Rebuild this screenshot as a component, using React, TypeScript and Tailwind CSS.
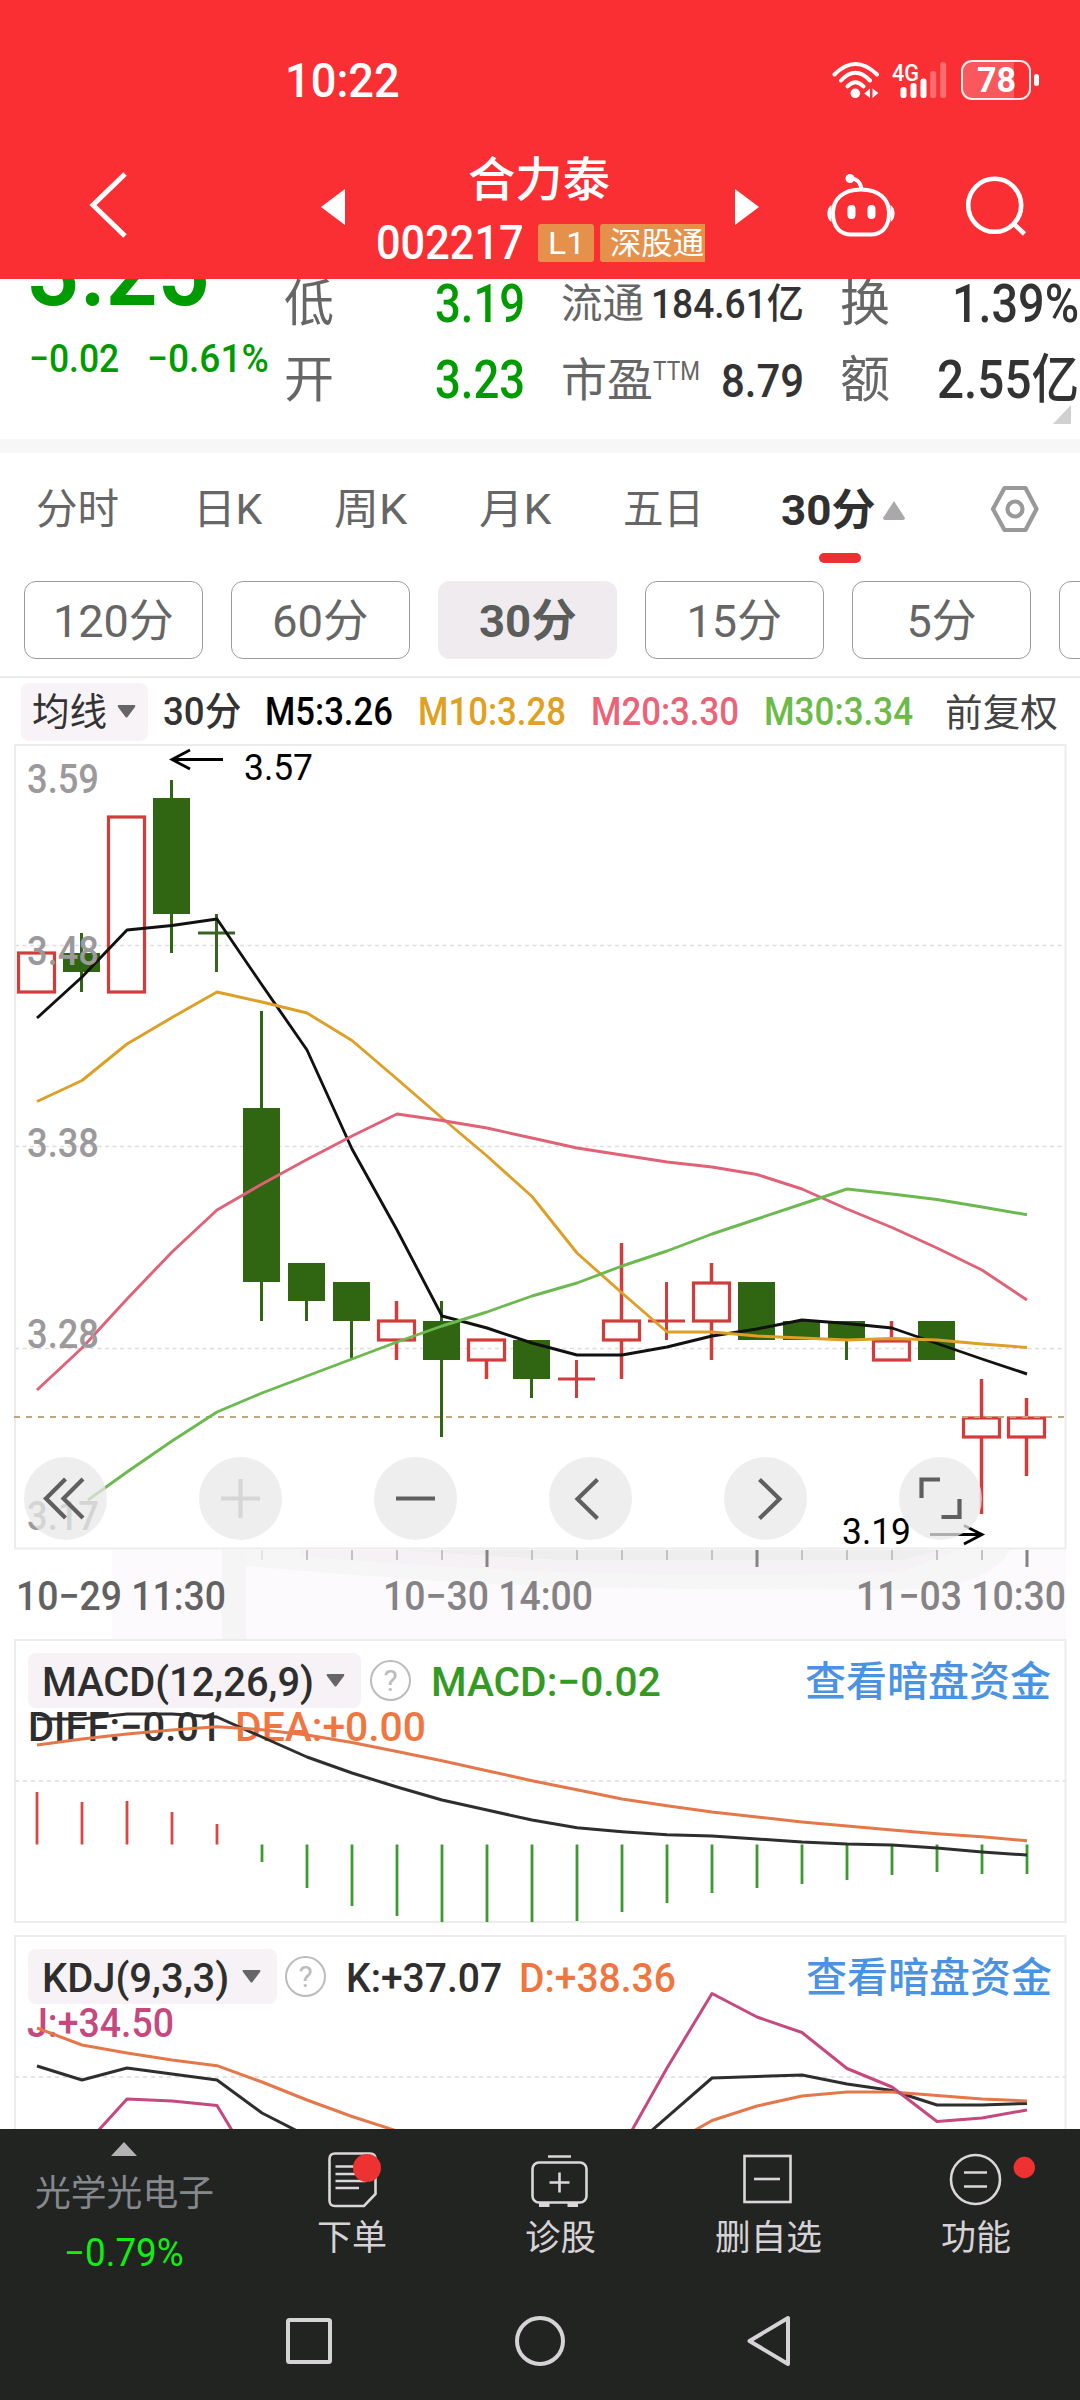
import { useLayoutEffect, useRef, useState } from 'react';
import type { ReactNode } from 'react';
import clsx from 'clsx';

const FONT = "font-[Roboto,'Noto_Sans_CJK_SC',sans-serif]";

// Condensed label: squeezes its text horizontally into the width given by className
const Fit = ({ className, children }: { className: string; children: ReactNode }) => {
  const inner = useRef<HTMLSpanElement>(null);
  const [scale, setScale] = useState(1);

  useLayoutEffect(() => {
    const el = inner.current;
    if (el && el.parentElement) {
      setScale(el.parentElement.clientWidth / el.offsetWidth);
    }
  }, [children]);

  return (
    <span className={clsx('block shrink-0 whitespace-nowrap leading-none', className)}>
      <span ref={inner} className="inline-block origin-left" style={{ transform: `scaleX(${scale})` }}>
        {children}
      </span>
    </span>
  );
};

const StatusBar = () => (
  <div className="flex h-[160px] items-center pl-[285px] text-white">
    <Fit className="w-[115px] pt-[2px] text-[48px]">10:22</Fit>
    <svg className="ml-[432px] h-[38px] w-[48px] shrink-0" viewBox="0 0 48 38" fill="none" stroke="#fff" strokeWidth="4" strokeLinecap="round">
      <path d="M2.5 13.5Q23.3 -7.5 45 13.5M9 19.5Q23.3 4 38 19.5M15.5 25.3Q23.3 17 31.5 25.3" />
      <circle cx="23.3" cy="32.3" r="4.8" fill="#fff" stroke="none" />
      <path d="M32.3 32.5L38 27.5V37zM40.5 27.5L46.3 32L40.5 37z" fill="#fff" stroke="none" />
    </svg>
    <div className="relative ml-[12px] h-[38px] w-[56px] shrink-0">
      <Fit className="w-[27px] text-[24px]">4G</Fit>
      <svg className="absolute left-0 top-0 h-[38px] w-[56px]" viewBox="0 0 56 38" fill="#fff">
        <rect x="8.5" y="26" width="6" height="11" rx="2.5" />
        <rect x="18.5" y="22" width="6" height="15" rx="2.5" />
        <rect x="28.5" y="17.5" width="6" height="19.5" rx="2.5" />
        <rect x="38.2" y="10" width="6" height="27" rx="2.5" opacity=".3" />
        <rect x="48.2" y="1" width="6" height="36" rx="2.5" opacity=".3" />
      </svg>
    </div>
    <div className="ml-[13px] flex h-[40px] w-[70px] shrink-0 items-center justify-center rounded-[11px] border-[2.5px] border-white/90 bg-linear-to-r from-white/20 from-78% to-transparent to-78%">
      <Fit className="w-[39px] text-[35px] font-bold">78</Fit>
    </div>
    <div className="ml-[3px] h-[12px] w-[4.5px] shrink-0 rounded-full bg-white" />
  </div>
);

const TitleBar = () => (
  <div className="flex h-[119px] pl-[88px] text-white">
    <svg className="mt-[10px] h-[70px] w-[42px] shrink-0" viewBox="0 0 42 70" fill="none" stroke="#fff" strokeWidth="5">
      <path d="M37 4L5 35L37 66" />
    </svg>
    <svg className="ml-[191px] mt-[29px] h-[36px] w-[24px] shrink-0" viewBox="0 0 24 36" fill="#fff">
      <path d="M0 18L24 0V36z" />
    </svg>
    <div className="ml-[29px] w-[333px] shrink-0">
      <div className="mt-[-6px] flex h-[50px] items-center justify-center pr-[4px]">
        <Fit className="w-[142px] text-[47px]">合力泰</Fit>
      </div>
      <div className="mt-[20px] flex h-[38px] items-center">
        <Fit className="ml-[2px] w-[148px] text-[48px]">002217</Fit>
        <span className="ml-[14px] flex h-[38px] w-[56px] items-center justify-center rounded-[3px] bg-[#e5914b] font-normal">
          <Fit className="w-[37px] text-[32px]">L1</Fit>
        </span>
        <span className="ml-[6px] flex h-[38px] w-[105px] items-center rounded-l-[3px] bg-[#e5914b] pl-[10px] font-normal">
          <Fit className="w-[94px] text-[31px]">深股通</Fit>
        </span>
      </div>
    </div>
    <svg className="ml-[28px] mt-[29px] h-[36px] w-[24px] shrink-0" viewBox="0 0 24 36" fill="#fff">
      <path d="M24 18L0 0V36z" />
    </svg>
    {/* assistant: wide rounded head with ears and a bent antenna */}
    <svg className="ml-[66px] mt-[12px] h-[68px] w-[72px] shrink-0" viewBox="0 0 72 68" fill="none" stroke="#fff" strokeWidth="4">
      <path d="M36 17.500C54 17.500 64 27 64 41C64 56 56 62.500 46 62.500H26C16 62.500 8 56 8 41C8 27 18 17.500 36 17.500z" />
      <circle cx="25" cy="6.500" r="4.500" fill="#fff" stroke="none" />
      <path d="M25 6C33 7 36 11 36.500 18" />
      <path d="M6.500 33C1 36 1 47 6.500 50zM65.500 33C71 36 71 47 65.500 50z" fill="#fff" stroke="none" />
      <rect x="22.500" y="33" width="8" height="14" rx="4" fill="#fff" stroke="none" />
      <rect x="42.500" y="33" width="8" height="14" rx="4" fill="#fff" stroke="none" />
    </svg>
    <svg className="ml-[68px] mt-[14px] h-[64px] w-[64px] shrink-0" viewBox="0 0 64 64" fill="none" stroke="#fff" strokeWidth="4.600">
      <circle cx="29.700" cy="31.300" r="26.500" />
      <path d="M48 49L59.500 60" />
    </svg>
  </div>
);

const QuoteStrip = () => (
  <div className="relative flex h-[160px] overflow-hidden">
    <div className="w-[284px] shrink-0 text-[#009b00]">
      <div className="flex h-[36px] items-end pl-[28px]">
        <Fit className="mb-[-6px] w-[182px] text-[98px] font-semibold">3.25</Fit>
      </div>
      <div className="mt-[24px] flex h-[40px] items-center pl-[29px]">
        <Fit className="w-[90px] text-[39px]">−0.02</Fit>
        <Fit className="ml-[28px] w-[122px] text-[39px]">−0.61%</Fit>
      </div>
    </div>
    <div className="text-[#666]">
      <div className="flex h-[50px] items-center">
        <Fit className="w-[50px] text-[50px] font-normal">低</Fit>
        <Fit className="ml-[101px] w-[90px] text-[53px]"><span className="text-[#009b00]">3.19</span></Fit>
        <Fit className="ml-[36px] w-[83px] text-[41px] font-normal">流通</Fit>
        <Fit className="ml-[7px] w-[153px] text-[41px] text-[#333]">184.61亿</Fit>
        <Fit className="ml-[36px] w-[50px] text-[50px] font-normal">换</Fit>
        <Fit className="ml-[62px] w-[127px] text-[53px] text-[#333]">1.39%</Fit>
      </div>
      <div className="mt-[25px] flex h-[52px] items-center">
        <Fit className="w-[50px] text-[50px] font-normal">开</Fit>
        <Fit className="ml-[101px] w-[90px] text-[53px]"><span className="text-[#009b00]">3.23</span></Fit>
        <Fit className="ml-[36px] w-[92px] text-[46px] font-normal">市盈</Fit>
        <Fit className="mb-[18px] w-[47px] text-[25px] font-normal">TTM</Fit>
        <Fit className="ml-[21px] w-[83px] text-[47px] text-[#333]">8.79</Fit>
        <Fit className="ml-[36px] w-[50px] text-[50px] font-normal">额</Fit>
        <Fit className="ml-[47px] w-[142px] text-[53px] text-[#333]">2.55亿</Fit>
      </div>
    </div>
    <svg className="absolute bottom-[15px] right-[9px] h-[19px] w-[18px]" viewBox="0 0 18 19" fill="#d0d0d0">
      <path d="M18 0V19H0z" />
    </svg>
  </div>
);

const PeriodTabs = () => (
  <div className="flex h-[128px] items-start pl-[36px] pt-[31px] text-[#666]">
    <div className="flex h-[52px] items-center font-normal">
      <Fit className="w-[83px] text-[42px]">分时</Fit>
      <Fit className="ml-[74px] w-[69px] text-[42px]">日K</Fit>
      <Fit className="ml-[72px] w-[73px] text-[42px]">周K</Fit>
      <Fit className="ml-[72px] w-[72px] text-[42px]">月K</Fit>
      <Fit className="ml-[72px] w-[81px] text-[42px]">五日</Fit>
      <div className="relative ml-[77px] flex items-center">
        <Fit className="w-[94px] text-[43px] font-bold text-[#303030]">30分</Fit>
        <svg className="ml-[8px] h-[19px] w-[22px]" viewBox="0 0 22 19" fill="#aaa8aa">
          <path d="M11 0L22 17Q22 19 20 19H2Q0 19 0 17z" />
        </svg>
        <span className="absolute left-[38px] top-[64px] h-[10px] w-[42px] rounded-full bg-[#eb3132]" />
      </div>
      <svg className="mb-[2px] ml-[85px] h-[48px] w-[50px]" viewBox="0 0 50 48" fill="none" stroke="#999" strokeWidth="4.200" strokeLinejoin="round">
        <path d="M14.500 3H35.500L46.500 24L35.500 45H14.500L3 24z" />
        <circle cx="25" cy="24" r="7.500" />
      </svg>
    </div>
  </div>
);

const minutes = [
  { label: '120分', width: 'w-[121px]' },
  { label: '60分', width: 'w-[97px]' },
  { label: '30分', width: 'w-[98px]' },
  { label: '15分', width: 'w-[96px]' },
  { label: '5分', width: 'w-[70px]' },
];

const MinuteTabs = () => (
  <div className="flex h-[97px] items-start gap-[28px] overflow-hidden border-b-2 border-[#ececec] pl-[24px]">
    {minutes.map((item) => (
      <div
        key={item.label}
        className={clsx(
          'flex h-[78px] w-[179px] shrink-0 items-center justify-center rounded-[12px] pt-[3px]',
          item.label === '30分' ? 'bg-[#efebef] font-bold text-[#5a5d5a]' : 'border-[1.500px] border-[#9b9b9b] font-normal text-[#666]',
        )}
      >
        <Fit className={clsx('text-[45px]', item.width)}>{item.label}</Fit>
      </div>
    ))}
    <div className="h-[78px] w-[179px] shrink-0 rounded-[12px] border border-[#9b9b9b]" />
  </div>
);

const Caret = ({ className }: { className?: string }) => (
  <svg className={clsx('h-[13px] w-[19px] shrink-0', className)} viewBox="0 0 19 13" fill="#666">
    <path d="M1.500 0H17.500Q19 0 18 2L10.500 12Q9.500 13 8.500 12L1 2Q0 0 1.500 0z" />
  </svg>
);

const AverageRow = () => (
  <div className="flex h-[66px] items-center pl-[21px] pt-[3px] text-[39px]">
    <div className="flex h-[58px] w-[127px] items-center rounded-[8px] bg-[#f7f3f7] pl-[11px] text-[#333]">
      <Fit className="w-[75px] pt-[1px] text-[38px] font-normal">均线</Fit>
      <Caret className="ml-[10px]" />
    </div>
    <Fit className="ml-[15px] w-[78px] pt-[2px] text-[#333]">30分</Fit>
    <Fit className="ml-[24px] w-[128px] pt-[2px] text-black">M5:3.26</Fit>
    <Fit className="ml-[25px] w-[148px] pt-[2px] text-[#e0a020]">M10:3.28</Fit>
    <Fit className="ml-[25px] w-[148px] pt-[2px] text-[#ea6478]">M20:3.30</Fit>
    <Fit className="ml-[25px] w-[149px] pt-[2px] text-[#6cba48]">M30:3.34</Fit>
    <Fit className="ml-[32px] w-[113px] pt-[2px] text-[38px] font-normal text-[#444]">前复权</Fit>
  </div>
);

// [top wick, body top, body bottom, bottom wick, rising]
const candles: [number, number, number, number, boolean][] = [
  [953, 953, 992, 992, true],
  [933, 953, 972, 992, false],
  [817, 817, 992, 992, true],
  [780, 798, 914, 953, false],
  [914, 933, 933, 972, false],
  [1011, 1108, 1282, 1321, false],
  [1263, 1263, 1301, 1321, false],
  [1282, 1282, 1321, 1358, false],
  [1301, 1321, 1340, 1360, true],
  [1301, 1321, 1360, 1437, false],
  [1340, 1340, 1360, 1379, true],
  [1340, 1340, 1379, 1398, false],
  [1360, 1379, 1379, 1398, true],
  [1243, 1321, 1340, 1379, true],
  [1282, 1321, 1321, 1340, true],
  [1263, 1283, 1321, 1360, true],
  [1282, 1282, 1340, 1340, false],
  [1321, 1321, 1340, 1340, false],
  [1321, 1321, 1340, 1360, false],
  [1321, 1341, 1360, 1360, true],
  [1321, 1321, 1360, 1360, false],
  [1379, 1418, 1437, 1514, true],
  [1398, 1418, 1437, 1476, true],
];

const ma5 = [1018, 977, 930, 925.5, 919, 985, 1050, 1149, 1230, 1316, 1328, 1343, 1355, 1355, 1347, 1336, 1329, 1320, 1323.5, 1328, 1343.5, 1359, 1374];
const ma10 = [1101.5, 1080.5, 1044, 1017.5, 992, 1002, 1013, 1040.5, 1079, 1118, 1156, 1196.5, 1253, 1293, 1332, 1332, 1336, 1338, 1340, 1338.5, 1340, 1344, 1347.5];
const ma20 = [1390, 1348, 1299, 1252, 1210, 1184, 1159.5, 1136, 1114, 1120.5, 1128, 1138, 1148, 1155, 1162, 1167, 1174.5, 1189, 1209, 1227.5, 1248, 1270, 1300];
const ma30 = [1526, 1503, 1472, 1441, 1412, 1393, 1376, 1359, 1342, 1326, 1312, 1296, 1283, 1266, 1251, 1234, 1219, 1204, 1189, 1194, 1199.5, 1207, 1214.7];

const cx = (i: number) => 36.5 + i * 45;
const line = (ys: number[], from = 0) => ys.map((y, i) => `${cx(i + from) + 0.5},${y}`).join(' ');

const Label = ({ x, y, w, size, fill, children }: { x: number; y: number; w: number; size: number; fill: string; children: string }) => (
  <text x={x} y={y} textLength={w} lengthAdjust="spacingAndGlyphs" fontSize={size} fill={fill}>
    {children}
  </text>
);

const chartButtons: { d: string; muted?: boolean }[] = [
  { d: 'M41.500 22L22 41.500L41.500 61M59 22L39.500 41.500L59 61' },
  { d: 'M22 41.500H61M41.500 22V61', muted: true },
  { d: 'M22 41.500H61' },
  { d: 'M48.500 22.500L28.500 42L48.500 61.500' },
  { d: 'M35.500 22.500L55.500 42L35.500 61.500' },
  { d: 'M22.500 41V22.500H41M60.500 42V60H42.500' },
];

const CandleChart = () => (
  <div className="relative h-[896px]">
    <svg className="block h-[896px] w-[1080px]" viewBox="0 743 1080 896">
      {/* time axis backdrop */}
      <rect x="112" y="1550" width="954" height="98" fill="#fdfafe" />
      <rect x="222" y="1550" width="24" height="89" fill="#f5f5f5" />
      <path d="M246 1550H1010Q990 1588 900 1590L580 1588Q420 1582 246 1566z" fill="#f6f6f6" />
      <path d="M300 1550H960L900 1572Q600 1582 300 1556z" fill="#f5f1f4" />
      <path d="M400 1550H940L900 1560H560z" fill="#eeeeee" />

      <g stroke="#dedede" strokeWidth="1.500" strokeDasharray="4 3.500">
        <path d="M15 945.500H1066M15 1146.500H1066M15 1348.500H1066" />
      </g>
      <rect x="15" y="745" width="1050.500" height="803.500" fill="none" stroke="#ececec" strokeWidth="2" />

      {candles.map(([high, top, bottom, low, rising], i) => {
        const x = cx(i);
        if (top === bottom) {
          return (
            <path key={i} d={`M${x} ${high}V${low}M${x - 18.5} ${top}H${x + 18.5}`} stroke={rising ? '#d23c3a' : '#386320'} strokeWidth="3" />
          );
        }
        return rising ? (
          <g key={i} fill="none" stroke="#d23c3a" strokeWidth="3.200">
            <path d={`M${x} ${high}V${top}M${x} ${bottom}V${low}`} strokeWidth="3.500" />
            <rect x={x - 18} y={top} width="36" height={bottom - top} />
          </g>
        ) : (
          <g key={i} fill="#306612">
            <rect x={x - 1.5} y={high} width="3" height={low - high} />
            <rect x={x - 18.5} y={top} width="37" height={bottom - top} />
          </g>
        );
      })}

      <path d="M14 1417H1066" stroke="#bfa67c" strokeWidth="2" strokeDasharray="6 6" />

      <g fill="none" strokeWidth="2.900" strokeLinejoin="round">
        <polyline points={line(ma5)} stroke="#111" />
        <polyline points={line(ma10)} stroke="#dd9f25" />
        <polyline points={line(ma20)} stroke="#e06276" />
        <polyline points={`88,1500 ${line(ma30.slice(2), 2)}`} stroke="#6cb94f" />
      </g>

      <g fill="none" stroke="#000" strokeWidth="2.800">
        <path d="M223 759.500H172M190 750L172 759.500L190 769" />
        <path d="M930 1534.500H982M964 1525.500L982 1534.500L964 1544" />
      </g>
      <Label x={27} y={793} w={72} size={41} fill="#9b999b">3.59</Label>
      <Label x={27} y={964.5} w={72} size={41} fill="#9b999b">3.48</Label>
      <Label x={27} y={1157} w={72} size={41} fill="#9b999b">3.38</Label>
      <Label x={27} y={1347.5} w={72} size={41} fill="#9b999b">3.28</Label>
      <Label x={27} y={1529.5} w={72} size={41} fill="#9b999b">3.17</Label>
      <g className="font-normal">
        <Label x={244} y={780} w={69} size={36} fill="#000">3.57</Label>
        <Label x={842} y={1544} w={69} size={36} fill="#000">3.19</Label>
      </g>

      {Array.from({ length: 18 }, (_, k) => k + 5).map((i) => {
        const major = (i - 10) % 6 === 0;
        return (
          <path
            key={i}
            d={`M${cx(i) + 0.5} 1550V${major ? 1567 : 1560}`}
            stroke={major ? '#858585' : i === 5 ? '#e4e2e4' : '#c4c2c4'}
            strokeWidth={major ? 3 : 2}
          />
        );
      })}
      <Label x={16} y={1610} w={210} size={40} fill="#626262">10−29 11:30</Label>
      <Label x={383} y={1610} w={210} size={40} fill="#858385">10−30 14:00</Label>
      <Label x={856} y={1610} w={210} size={40} fill="#858385">11−03 10:30</Label>
    </svg>

    {/* floating controls */}
    <div className="absolute left-[24px] top-[714px] flex gap-[92px]">
      {chartButtons.map((b) => (
        <button key={b.d} className="size-[83px] rounded-full bg-[#e8e8e8]/75">
          <svg className="size-[83px]" viewBox="0 0 83 83" fill="none" stroke={b.muted ? '#d6d6d6' : '#5f5f5f'} strokeWidth="4.200">
            <path d={b.d} />
          </svg>
        </button>
      ))}
    </div>
  </div>
);

const Help = ({ className }: { className?: string }) => (
  <span className={clsx('flex size-[41px] shrink-0 items-center justify-center rounded-full border-[2.500px] border-[#bcbcbc] text-[30px] font-normal leading-none text-[#bcbcbc]', className)}>
    ?
  </span>
);

const diff = [1719, 1719, 1714, 1714, 1717, 1737, 1757, 1773, 1787, 1800, 1810, 1820, 1827.7, 1831.7, 1834.7, 1836, 1839, 1842, 1844, 1845, 1848, 1852, 1855];
const dea = [1745, 1739, 1734, 1730, 1726.7, 1729.7, 1735, 1742.5, 1751.5, 1760.7, 1770.7, 1780.7, 1789.7, 1799, 1805.7, 1812, 1817, 1822, 1826, 1830, 1833.7, 1836.7, 1840.7];
const macd = [1792, 1802, 1801, 1812, 1824, 1862, 1888, 1906, 1916, 1922, 1922, 1922, 1921, 1912, 1903, 1893, 1888, 1884, 1880, 1875, 1872, 1874, 1874];

const MacdPanel = () => (
  <div className="relative h-[296px] text-[41px]">
    <svg className="absolute left-0 top-0 h-[296px] w-[1080px]" viewBox="0 1639 1080 296" fill="none">
      <rect x="15" y="1640" width="1050.500" height="282" stroke="#ececec" strokeWidth="2" />
      <path d="M15 1781H1066" stroke="#e4e4e4" strokeWidth="2" strokeDasharray="4 4" />
      {macd.map((y, i) => (
        <path key={i} d={`M${cx(i) + 0.5} 1844.5V${y}`} stroke={y < 1844 ? '#dc4644' : '#3c9a30'} strokeWidth="2.800" />
      ))}
    </svg>
    <div className="flex h-[83px] items-center pl-[28px]">
      <div className="flex h-[55px] w-[333px] items-center rounded-[8px] bg-[#f6f2f6] pl-[14px] text-[#2e2e2e]">
        <Fit className="w-[272px] pt-[4px]">MACD(12,26,9)</Fit>
        <Caret className="ml-[12px]" />
      </div>
      <Help className="ml-[9px]" />
      <Fit className="ml-[20px] w-[230px] pt-[4px] text-[#349a22]">MACD:−0.02</Fit>
      <Fit className="ml-[144px] w-[246px] pt-[3px] text-[#4a92e2]">查看暗盘资金</Fit>
    </div>
    <div className="mt-[-17px] flex h-[44px] items-center pl-[28px]">
      <Fit className="w-[194px]"><span className="text-[#2e2e2e]">DIFF:−0.01</span></Fit>
      <Fit className="ml-[13px] w-[191px] text-[#f0763f]">DEA:+0.00</Fit>
    </div>
    <svg className="absolute left-0 top-0 h-[296px] w-[1080px]" viewBox="0 1639 1080 296" fill="none" strokeWidth="3" strokeLinejoin="round">
      <polyline points={line(diff)} stroke="#2e2e2e" />
      <polyline points={line(dea)} stroke="#e4784a" />
    </svg>
  </div>
);

const KdjPanel = () => (
  <div className="relative h-[194px] overflow-hidden text-[41px]">
    <svg className="absolute left-0 top-0 h-[194px] w-[1080px]" viewBox="0 1935 1080 194" fill="none">
      <rect x="15" y="1936" width="1050.500" height="280" stroke="#ececec" strokeWidth="2" />
      <path d="M15 2077H1066" stroke="#e4e4e4" strokeWidth="2" strokeDasharray="4 4" />
    </svg>
    <div className="flex h-[83px] items-center pl-[28px]">
      <div className="flex h-[55px] w-[249px] items-center rounded-[8px] bg-[#f6f2f6] pl-[14px] text-[#2e2e2e]">
        <Fit className="w-[187px] pt-[4px]">KDJ(9,3,3)</Fit>
        <Caret className="ml-[13px]" />
      </div>
      <Help className="ml-[8px]" />
      <Fit className="ml-[20px] w-[156px] pt-[4px] text-[#2e2e2e]">K:+37.07</Fit>
      <Fit className="ml-[17px] w-[157px] pt-[4px] text-[#f0763f]">D:+38.36</Fit>
      <Fit className="ml-[130px] w-[246px] pt-[3px] text-[#4a92e2]">查看暗盘资金</Fit>
    </div>
    <div className="mt-[-17px] flex h-[44px] items-center pl-[27px]">
      <Fit className="w-[147px] text-[#c5487f]">J:+34.50</Fit>
    </div>
    <svg className="absolute left-0 top-0 h-[194px] w-[1080px]" viewBox="0 1935 1080 194" fill="none" strokeWidth="3" strokeLinejoin="round">
      <polyline points={line([2066, 2080, 2068, 2074, 2080, 2113, 2136])} stroke="#2e2e2e" />
      <polyline points={`650,2132 ${line([2078, 2076.5, 2075, 2084, 2090.5, 2105, 2105, 2103.5], 15)}`} stroke="#2e2e2e" />
      <polyline points={line([2028, 2045, 2053, 2060, 2065.7, 2082, 2100, 2116.5, 2131])} stroke="#e4784a" />
      <polyline points={`692,2132 ${line([2120.5, 2106, 2096, 2092, 2092, 2095.5, 2099, 2101], 15)}`} stroke="#e4784a" />
      <polyline points={`97,2132 ${line([2099, 2101, 2105.5], 2)} 233,2132`} stroke="#c5487f" />
      <polyline points={`631,2132 ${line([2068, 1993.5, 2017, 2032.5, 2068.5, 2087, 2121.5, 2118, 2110], 14)}`} stroke="#c5487f" />
    </svg>
  </div>
);

const actions = [
  {
    label: '下单',
    width: 'w-[70px]',
    icon: (
      <>
        <path d="M13 3.500H48Q53.500 3.500 53.500 9V44L42 56H13Q7.500 56 7.500 50.500V9Q7.500 3.500 13 3.500z" />
        <path d="M13.500 16.500H35M13.500 24H38M13.500 31H44M13.500 38H37" />
        <circle cx="45" cy="18" r="14" fill="#ee3232" stroke="none" />
      </>
    ),
  },
  {
    label: '诊股',
    width: 'w-[71px]',
    icon: (
      <>
        <rect x="2.500" y="12.500" width="54" height="40" rx="6.500" />
        <path d="M18 6.500H41M29.500 22.500V42.500M19.500 32.500H39.500" />
        <path d="M9 55H19.500M37.500 55H48" strokeWidth="4" />
      </>
    ),
  },
  {
    label: '删自选',
    width: 'w-[107px]',
    icon: (
      <>
        <rect x="6.500" y="6" width="46" height="46" />
        <path d="M16 29H42" />
      </>
    ),
  },
  {
    label: '功能',
    width: 'w-[70px]',
    icon: (
      <>
        <circle cx="29.500" cy="29.500" r="24.500" />
        <path d="M18 22.500H41M18 36.500H41" />
        <circle cx="78.300" cy="17.500" r="10.700" fill="#ee3232" stroke="none" />
      </>
    ),
  },
];

const BottomBar = () => (
  <div className="h-[271px] bg-[#222422] font-normal">
    <div className="flex h-[156px]">
      <div className="flex w-[248px] shrink-0 flex-col items-center pt-[13px]">
        <svg className="h-[14px] w-[26px]" viewBox="0 0 26 14" fill="#b4b2b4">
          <path d="M13 0L26 14H0z" />
        </svg>
        <Fit className="mt-[20px] w-[179px] text-[36px] text-[#85898e]">光学光电子</Fit>
        <Fit className="mt-[22px] w-[120px] text-[38px] text-[#12ee12]">−0.79%</Fit>
      </div>
      {actions.map((a) => (
        <div key={a.label} className="flex w-[208px] shrink-0 flex-col items-center pt-[21px]">
          <svg className="size-[60px] overflow-visible" viewBox="0 0 60 60" fill="none" stroke="#dad6da" strokeWidth="2.600">
            {a.icon}
          </svg>
          <Fit className={clsx('mt-[11px] text-[35px] text-[#d6d3d6]', a.width)}>{a.label}</Fit>
        </div>
      ))}
    </div>
    <div className="flex h-[112px] items-center pl-[284px]">
      <svg className="size-[50px]" viewBox="0 0 50 50" fill="none" stroke="#d6d3d6" strokeWidth="4">
        <rect x="4" y="4" width="42" height="42" rx="1.500" />
      </svg>
      <svg className="ml-[181px] size-[52px]" viewBox="0 0 52 52" fill="none" stroke="#d6d3d6" strokeWidth="4">
        <circle cx="25" cy="26" r="23" />
      </svg>
      <svg className="ml-[178px] size-[52px]" viewBox="0 0 52 52" fill="none" stroke="#d6d3d6" strokeWidth="4" strokeLinejoin="round">
        <path d="M43 3V49L4.500 26z" />
      </svg>
    </div>
  </div>
);

export default function App() {
  return (
    <div className={clsx('h-[2400px] w-[1080px] overflow-hidden bg-white font-medium', FONT)}>
      <div className="h-[279px] bg-[#f92f34]">
        <StatusBar />
        <TitleBar />
      </div>
      <QuoteStrip />
      <div className="h-[14px] bg-[#f7f7f7]" />
      <PeriodTabs />
      <MinuteTabs />
      {/* row above the candles starts right below the divider */}
      <div className="-mt-px">
        <AverageRow />
      </div>
      <CandleChart />
      <MacdPanel />
      <KdjPanel />
      <BottomBar />
    </div>
  );
}
